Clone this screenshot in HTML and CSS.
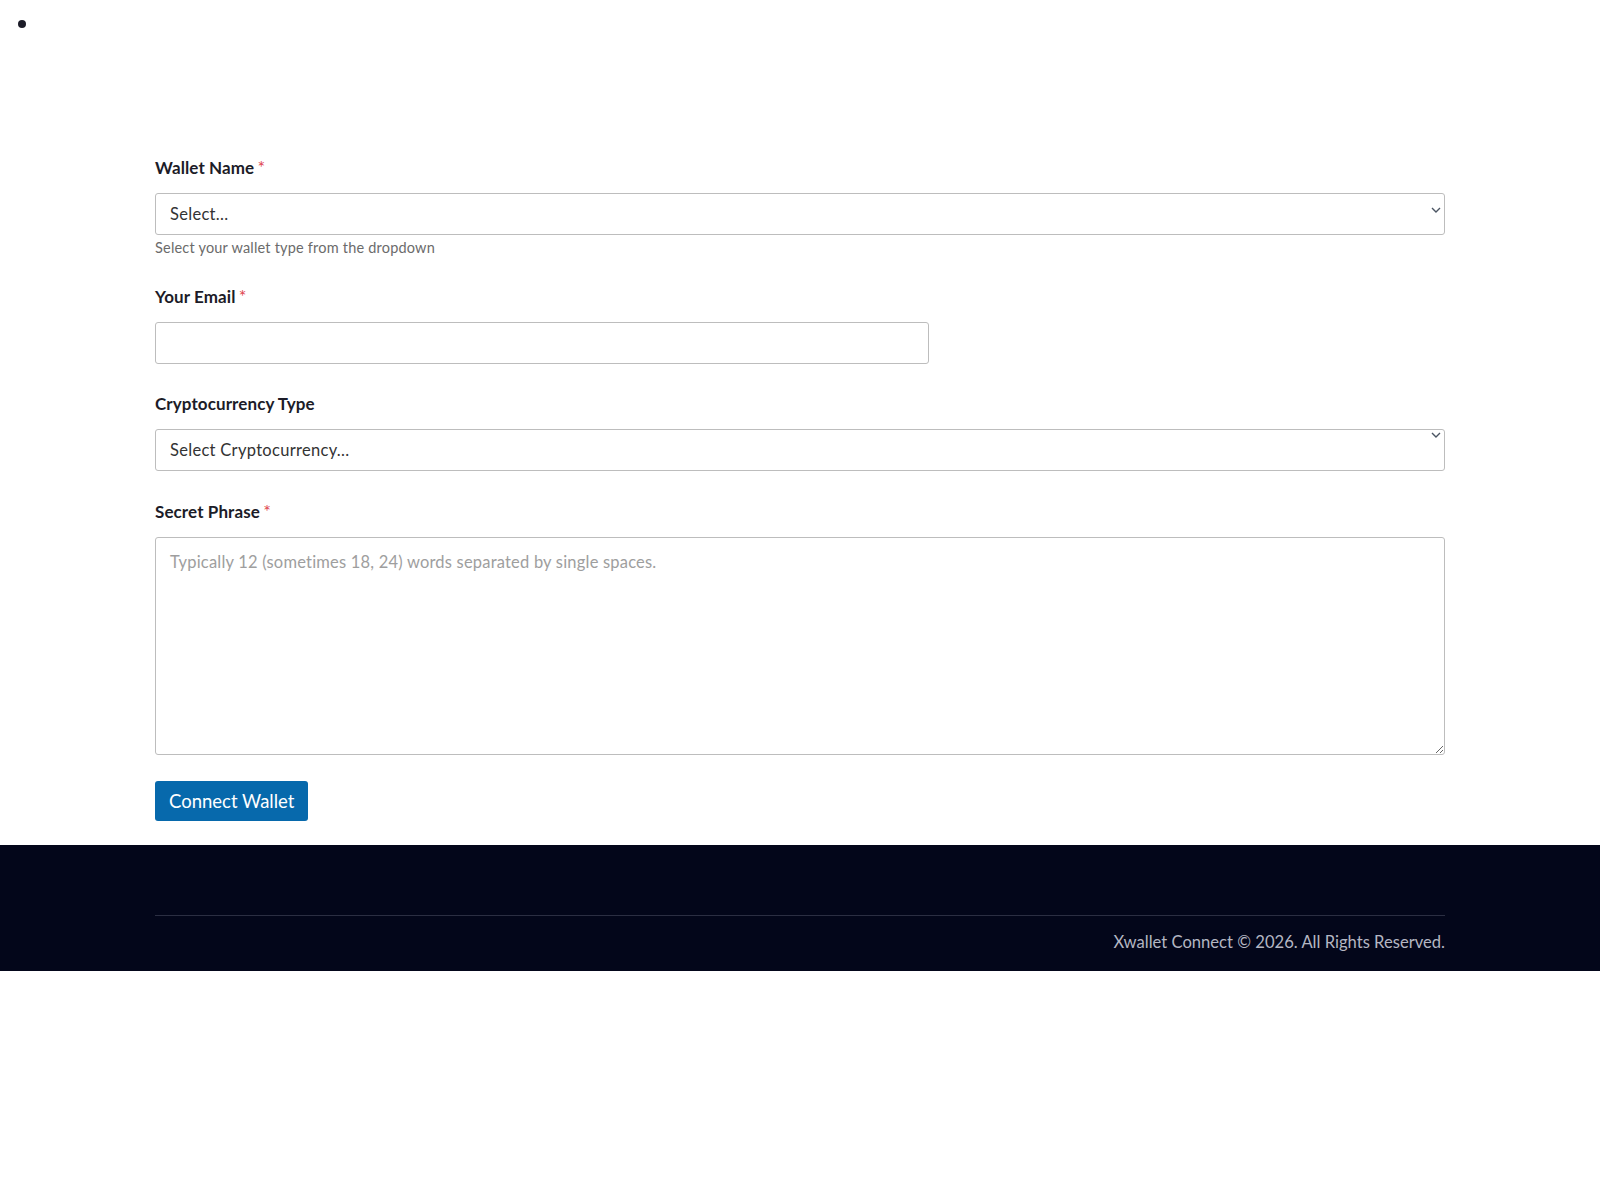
FILE: index.html
```html
<!DOCTYPE html>
<html lang="en">
<head>
    <meta charset="UTF-8">
    <meta name="viewport" content="width=device-width, initial-scale=1.0">
    <title>Xwallet Connect</title>
    <link rel="stylesheet" href="styles.css">
</head>
<body>
    <ul class="topnav">
        <li></li>
    </ul>
    <section class="connect">
        <div class="container">
            <form class="wallet-form" action="javascript:;">
                <!-- 钱包名称 -->
                <div class="group">
                    <label class="label">Wallet Name <span class="req">*</span></label>
                    <div class="select-wrap">
                        <select class="field">
                            <option>Select...</option>
                        </select>
                        <svg class="chevron" width="10" height="6" viewBox="0 0 10 6"><path d="M1 1l4 4 4-4" fill="none" stroke="#4b5563" stroke-width="1.4"/></svg>
                    </div>
                    <div class="help">Select your wallet type from the dropdown</div>
                </div>
                <!-- 邮箱 -->
                <div class="group">
                    <label class="label">Your Email <span class="req">*</span></label>
                    <input class="field field-email" type="email">
                </div>
                <!-- 币种 -->
                <div class="group">
                    <label class="label">Cryptocurrency Type</label>
                    <div class="select-wrap">
                        <select class="field">
                            <option>Select Cryptocurrency...</option>
                        </select>
                        <svg class="chevron chevron-top" width="10" height="6" viewBox="0 0 10 6"><path d="M1 1l4 4 4-4" fill="none" stroke="#4b5563" stroke-width="1.4"/></svg>
                    </div>
                </div>
                <!-- 助记词 -->
                <div class="group">
                    <label class="label">Secret Phrase <span class="req">*</span></label>
                    <textarea class="field field-area" placeholder="Typically 12 (sometimes 18, 24) words separated by single spaces."></textarea>
                </div>
                <button class="btn" type="submit">Connect Wallet</button>
            </form>
        </div>
    </section>
    <footer class="footer">
        <div class="container">
            <div class="footer-line"></div>
            <p class="copy">Xwallet Connect &copy; 2026. All Rights Reserved.</p>
        </div>
    </footer>
</body>
</html>
```

FILE: styles.css
```css
*{
    box-sizing: border-box;
}
body{
    margin: 0;
    font-family: Lato, "Open Sans", Arial, sans-serif;
    color: #1c1c28;
    background-color: #fff;
}
.topnav{
    margin: 0;
    padding: 11px 0 0 41px;
    font-size: 24px;
    line-height: 24px;
}
.container{
    max-width: 1320px;
    margin: 0 auto;
    padding: 0 15px;
}
.connect{
    padding-top: 120px;
    padding-bottom: 24px;
}
.group{
    margin-bottom: 28px;
}
.label{
    display: block;
    font-size: 17px;
    line-height: 24px;
    font-weight: 700;
    letter-spacing: 0.1px;
    margin-bottom: 13px;
}
.req{
    color: #e0464f;
    font-weight: 400;
    font-size: 18px;
    margin-left: -1px;
}
.select-wrap{
    position: relative;
}
.field{
    display: block;
    width: 100%;
    height: 42px;
    padding: 0 14px;
    font-family: inherit;
    font-size: 16.5px;
    letter-spacing: 0.3px;
    color: #333;
    background-color: #fff;
    border: 1px solid #bdbdbd;
    border-radius: 3px;
    appearance: none;
    -webkit-appearance: none;
    outline: none;
}
.chevron{
    position: absolute;
    right: 4px;
    top: 14px;
    pointer-events: none;
}
.chevron-top{
    top: 3px;
}
.help{
    margin-top: 4px;
    font-size: 14.5px;
    line-height: 17px;
    letter-spacing: 0.2px;
    color: #6b6b6b;
}
.field-email{
    width: 60%;
}
.field-area{
    height: 218px;
    padding: 12px 14px;
    line-height: 24px;
    letter-spacing: 0.2px;
    resize: vertical;
}
.field-area::placeholder{
    color: #9e9e9e;
}
.wallet-form > .group:last-of-type{
    margin-bottom: 25.5px;
}
.btn{
    display: block;
    height: 40px;
    padding: 0 14px;
    font-family: inherit;
    font-size: 18.5px;
    color: #fff;
    background-color: #0769ac;
    border: none;
    border-radius: 3px;
    cursor: pointer;
}
.footer{
    background-color: #03061a;
    padding-top: 70px;
    padding-bottom: 16px;
}
.footer-line{
    height: 1px;
    background-color: #2b2e42;
}
.copy{
    margin: 13px 0 0;
    text-align: right;
    font-size: 16.6px;
    line-height: 26px;
    color: #b4b6c2;
}
```
